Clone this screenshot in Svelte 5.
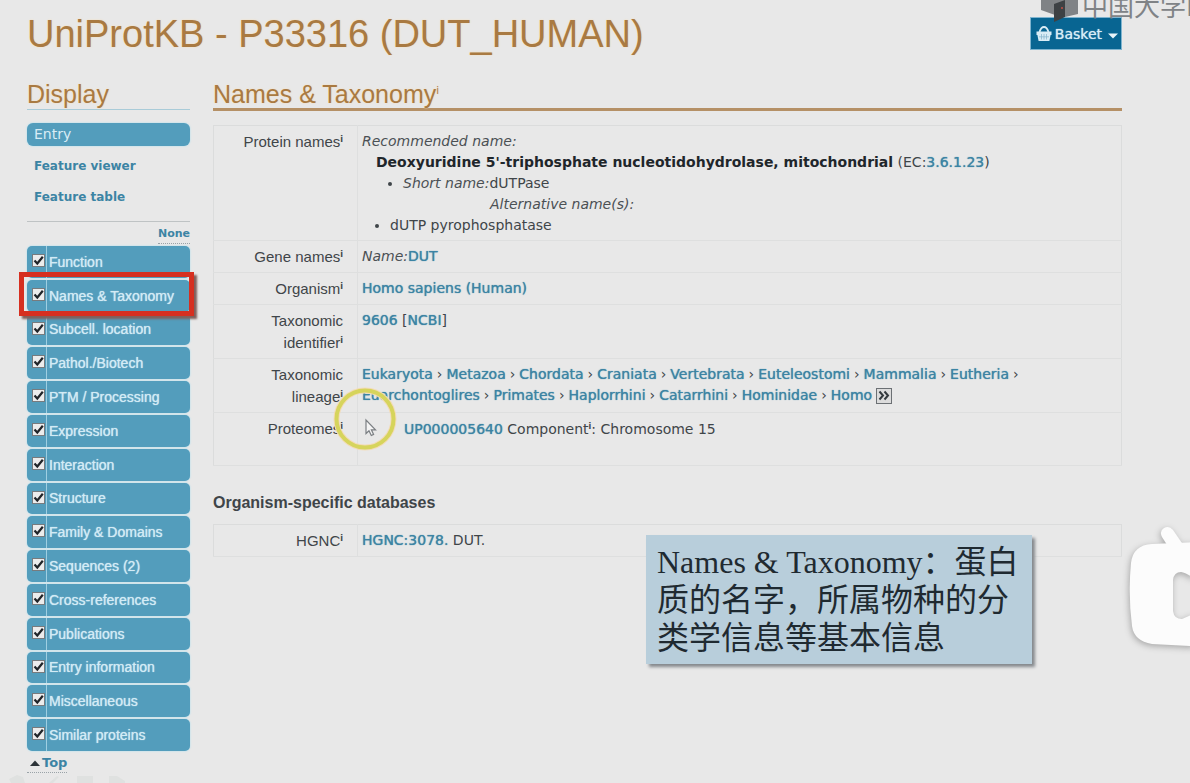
<script>
  const sections = [
    'Function', 'Names & Taxonomy', 'Subcell. location', 'Pathol./Biotech',
    'PTM / Processing', 'Expression', 'Interaction', 'Structure',
    'Family & Domains', 'Sequences (2)', 'Cross-references', 'Publications',
    'Entry information', 'Miscellaneous', 'Similar proteins'
  ];
  const lineage = [
    ['Eukaryota', 'Metazoa', 'Chordata', 'Craniata', 'Vertebrata', 'Euteleostomi', 'Mammalia', 'Eutheria'],
    ['Euarchontoglires', 'Primates', 'Haplorrhini', 'Catarrhini', 'Hominidae', 'Homo']
  ];
</script>

<div class="page">
  <header>
    <h1>UniProtKB - P33316 (DUT_HUMAN)</h1>
    <button class="basket" type="button">
      <svg width="16" height="16" viewBox="0 0 16 16" aria-hidden="true">
        <path d="M3.5 6 Q5 1 8 1 Q11 1 12.5 6" fill="none" stroke="#d9ecf5" stroke-width="1.8" />
        <path d="M0.5 5.5 H15.5 V9 H14.6 L13.4 15 H2.6 L1.4 9 H0.5 Z" fill="#d9ecf5" />
        <path d="M5.5 8 V13.5 M8 8 V13.5 M10.5 8 V13.5 M3 10.8 H13" stroke="#8db9cf" stroke-width="0.8" />
      </svg>
      <span>Basket</span>
      <svg class="caret" width="10" height="6" viewBox="0 0 10 6" aria-hidden="true"><path d="M0 0.5 H10 L5 5.5 Z" fill="#e6f3f9" /></svg>
    </button>
  </header>

  <div class="columns">
    <aside>
      <h2 class="display">Display</h2>
      <nav class="views">
        <a class="current" href="#entry">Entry</a>
        <a href="#viewer">Feature viewer</a>
        <a href="#table">Feature table</a>
      </nav>
      <div class="none"><a href="#none">None</a></div>
      <ul class="sections">
        {#each sections as name, i}
          <li class:marked={i === 1}>
            <input type="checkbox" id="s{i}" checked />
            <label for="s{i}">{name}</label>
          </li>
        {/each}
      </ul>
      <a class="top" href="#top">
        <svg width="10" height="6" viewBox="0 0 10 6" aria-hidden="true"><path d="M0 6 L5 0.5 L10 6 Z" fill="#2c3338" /></svg>Top</a>
    </aside>

    <main>
      <h2 class="heading">Names &amp; Taxonomy<sup>i</sup></h2>
      <table>
        <tbody>
          <tr>
            <th scope="row">Protein names<sup>i</sup></th>
            <td>
              <div><em>Recommended name:</em></div>
              <div class="full"><strong>Deoxyuridine 5'-triphosphate nucleotidohydrolase, mitochondrial</strong> (EC:<a href="#ec">3.6.1.23</a>)</div>
              <ul class="short"><li><em>Short name:</em>dUTPase</li></ul>
              <div class="alt"><em>Alternative name(s):</em></div>
              <ul class="other"><li>dUTP pyrophosphatase</li></ul>
            </td>
          </tr>
          <tr>
            <th scope="row">Gene names<sup>i</sup></th>
            <td><em>Name:</em><a href="#dut">DUT</a></td>
          </tr>
          <tr>
            <th scope="row">Organism<sup>i</sup></th>
            <td><a href="#human">Homo sapiens (Human)</a></td>
          </tr>
          <tr>
            <th scope="row">Taxonomic identifier<sup>i</sup></th>
            <td><a href="#9606">9606</a> [<a href="#ncbi">NCBI</a>]</td>
          </tr>
          <tr>
            <th scope="row">Taxonomic lineage<sup>i</sup></th>
            <td>
              {#each lineage as line, l}
                <div class="line">
                  {#each line as taxon, t}
                    <a href="#{taxon}">{taxon}</a>{#if l === 0 || t < line.length - 1}<span>›</span>{/if}
                  {/each}
                  {#if l === 1}
                    <button class="more" type="button" aria-label="Show more">
                      <svg width="16" height="16" viewBox="0 0 16 16" aria-hidden="true">
                        <rect x="0.5" y="0.5" width="15" height="15" fill="#dcdcdc" stroke="#6c7074" />
                        <path d="M3.5 3.5 L7 7.5 L3.5 11.5 M8.5 3.5 L12 7.5 L8.5 11.5" fill="none" stroke="#33393d" stroke-width="2" />
                      </svg>
                    </button>
                  {/if}
                </div>
              {/each}
            </td>
          </tr>
          <tr class="proteomes">
            <th scope="row">Proteomes<sup>i</sup></th>
            <td><a href="#up">UP000005640</a> Component<sup>i</sup>: Chromosome 15</td>
          </tr>
        </tbody>
      </table>

      <h3>Organism-specific databases</h3>
      <table>
        <tbody>
          <tr>
            <th scope="row">HGNC<sup>i</sup></th>
            <td><a href="#hgnc">HGNC:3078.</a> DUT.</td>
          </tr>
        </tbody>
      </table>
    </main>
  </div>

  <svg class="pointer" width="64" height="64" viewBox="0 0 64 64" aria-hidden="true">
    <circle cx="32" cy="32" r="28.5" fill="none" stroke="#f3dcb8" stroke-width="6" />
    <circle cx="32" cy="32" r="28.5" fill="none" stroke="#d6d45c" stroke-width="4" />
    <path d="M33 33 V46.5 L36 43.7 L38.3 48.5 L40.6 47.4 L38.4 42.8 H42.5 Z" fill="#f4f4f4" stroke="#7b7f83" stroke-width="1.2" />
  </svg>

  <div class="note">
    <p>Names &amp; Taxonomy：蛋白</p>
    <p>质的名字，所属物种的分</p>
    <p>类学信息等基本信息</p>
  </div>

  <svg class="tv" width="66" height="130" viewBox="0 0 66 130" aria-hidden="true">
    <g fill="#fcfcfc">
      <path d="M34 15 Q31 9 36 6 Q41 3 45 8 L56 24 L41 26 Z" />
      <path fill-rule="evenodd" d="M3 41 Q5 23 24 22 L70 20 V125 L62 124 L24 122 Q6 119 4 104 Q0 72 3 41 Z M45 58 Q46 50 53 50 Q57 50 70 59 V90 L54 97 Q46 97 45 89 Z" />
    </g>
  </svg>

  <div class="watermark">
    <svg width="38" height="22" viewBox="0 0 38 22" aria-hidden="true">
      <path d="M0 0 H37 V14 L24 17 L14 15 L0 10 Z" fill="#808386" />
      <path d="M13 4 L24 0 V17 L13 22 Z" fill="#3d4144" />
      <rect x="20" y="7" width="2" height="2" fill="#a14a42" />
    </svg>
    <span>中国大学M</span>
  </div>

  <svg class="ghost" width="116" height="8" viewBox="0 0 116 8" aria-hidden="true">
    <g fill="#dfe1e0">
      <path d="M0 4 L8 0 L14 2 L16 8 H2 Z" />
      <path d="M40 8 L48 1 L50 2 L44 8 Z" />
      <path d="M68 1 H84 V8 H68 Z" />
      <path d="M100 1 H108 L116 6 V8 H100 Z" />
    </g>
  </svg>
</div>

<style>
  :global(body) { background: #e8e8e8; }
  .page {
    position: relative;
    box-sizing: border-box;
    min-height: 783px;
    padding: 0 68px 0 27px;
    overflow: hidden;
    color: #3f4549;
    font: 14px/21px "DejaVu Sans", Verdana, sans-serif;
  }
  a { color: #3c84a4; text-decoration: none; }
  aside a { font-weight: bold; }
  td a { text-shadow: 0 0 1px #3c84a4; }
  h1, h2, h3, p, ul { margin: 0; padding: 0; font-weight: normal; }
  header { display: flex; justify-content: space-between; align-items: flex-start; }
  h1, h2 { color: #a97a42; font-family: "Liberation Sans", Arial, sans-serif; text-shadow: 0 0 2px #f7dcb4; }
  h1 { padding-top: 12px; font-size: 38px; line-height: 44px; }
  .basket {
    display: flex;
    align-items: center;
    gap: 3px;
    height: 33px;
    margin-top: 17px;
    padding: 0 3px 0 5px;
    border: 1px solid #7fb4cf;
    background: #086592;
    color: #d9ecf5;
    font: 14px "DejaVu Sans", Verdana, sans-serif;
    text-shadow: 0 0 1px #d9ecf5;
  }
  .basket .caret { margin: 4px 0 0 3px; }

  .columns { display: grid; grid-template-columns: 163px minmax(0, 1fr); gap: 23px; padding-top: 23px; }
  h2 { font-size: 25px; }
  .display { border-bottom: 1px solid #a9cbd8; line-height: 30px; }
  .heading { margin-bottom: 14px; padding-top: 2px; border-bottom: 3px solid #b59066; line-height: 27px; }
  .heading sup { font-size: 10px; font-weight: normal; vertical-align: 9px; }

  .views { display: grid; gap: 8px; padding: 13px 0; border-bottom: 1px solid #bfc3c4; }
  .views a { padding: 2px 7px 0; font-size: 12px; line-height: 21px; }
  .views .current {
    padding: 1px 7px;
    border-radius: 6px;
    background: #539dbc;
    box-shadow: 0 0 2px #9fdcf0;
    color: #d9ecf5;
    font-size: 14px;
    font-weight: normal;
  }
  .none { display: flex; justify-content: flex-end; padding: 3px 0 2px; }
  .none a { border-bottom: 1px dotted #9aa3a8; font-size: 11px; line-height: 18px; }
  .sections { display: flex; flex-direction: column; gap: 2px; min-height: 505px; list-style: none; }
  .sections li {
    position: relative;
    flex: 1;
    display: flex;
    border-radius: 5px;
    background: #539dbc;
    box-shadow: 0 0 2px #9fdcf0;
  }
  .sections input {
    appearance: none;
    box-sizing: border-box;
    width: 13px;
    height: 13px;
    margin: 8px 0 0 5px;
    border: 1px solid #777b7e;
    background: #ececec url("data:image/svg+xml,%3Csvg xmlns='http://www.w3.org/2000/svg' viewBox='0 0 11 11'%3E%3Cpath d='M1.5 5.5 L4.3 8.5 L9.8 1.8' fill='none' stroke='%23202428' stroke-width='2.2'/%3E%3C/svg%3E");
  }
  .sections label {
    display: flex;
    align-items: center;
    flex: 1;
    margin-left: 1px;
    padding-left: 2px;
    border-left: 1px solid #9fcfe2;
    color: #d3ebf5;
    font: 14px "Liberation Sans", Arial, sans-serif;
    text-shadow: 0 0 1px #d3ebf5;
  }
  .marked::after {
    content: "";
    position: absolute;
    z-index: 1;
    inset: -8px -4px -4px -8px;
    border: 5px solid #d62f20;
    box-shadow: 3px 3px 2px #80605c;
    pointer-events: none;
  }
  .top { display: inline-flex; align-items: center; gap: 2px; margin-top: 3px; padding-left: 3px; border-bottom: 1px dotted #9aa3a8; font-size: 13px; line-height: 18px; }

  table { width: 100%; border-collapse: collapse; border: 1px solid #dbdcdc; }
  tr { border-bottom: 1px solid #dedfdf; }
  th, td { vertical-align: top; padding: 5px 4px 4px; }
  th {
    box-sizing: border-box;
    width: 144px;
    padding-right: 14px;
    padding-left: 20px;
    border-right: 1px solid #dedfdf;
    text-align: right;
    font: 15px/22px "Liberation Sans", Arial, sans-serif;
  }
  sup { font: bold 8px "DejaVu Sans", Verdana, sans-serif; line-height: 0; vertical-align: 5px; }
  em { color: #4b5054; }
  strong { color: #1f262b; }
  .full { padding-left: 14px; }
  .short { padding-left: 41px; }
  .alt { padding-left: 128px; }
  .other { padding-left: 28px; }
  .line { display: flex; align-items: center; gap: 4px; white-space: nowrap; }
  .more { display: flex; padding: 0; border: 0; background: none; }
  .proteomes td { padding: 6px 4px 25px 46px; }
  h3 { padding: 26px 0 11px; font: bold 16px/21px "Liberation Sans", Arial, sans-serif; }

  .pointer { position: absolute; left: 333px; top: 387px; }
  .note {
    position: absolute;
    left: 646px;
    top: 535px;
    padding: 8px 13px 7px 11px;
    background: #b8cedb;
    box-shadow: 3px 3px 3px #85898d;
    color: #1f2a31;
    font: 500 32px/38px "Liberation Serif", "Noto Sans CJK SC", serif;
    white-space: nowrap;
  }
  .tv { position: absolute; right: -4px; top: 522px; filter: drop-shadow(-1px 2px 3px #a8a8a8); }
  .watermark { position: absolute; left: 1041px; top: 0; display: flex; color: #808386; white-space: nowrap; }
  .watermark span { margin: -10px 0 0 3px; font: 26px/30px "Noto Sans CJK SC", sans-serif; }
  .ghost { position: absolute; left: 9px; bottom: 0; }
</style>
